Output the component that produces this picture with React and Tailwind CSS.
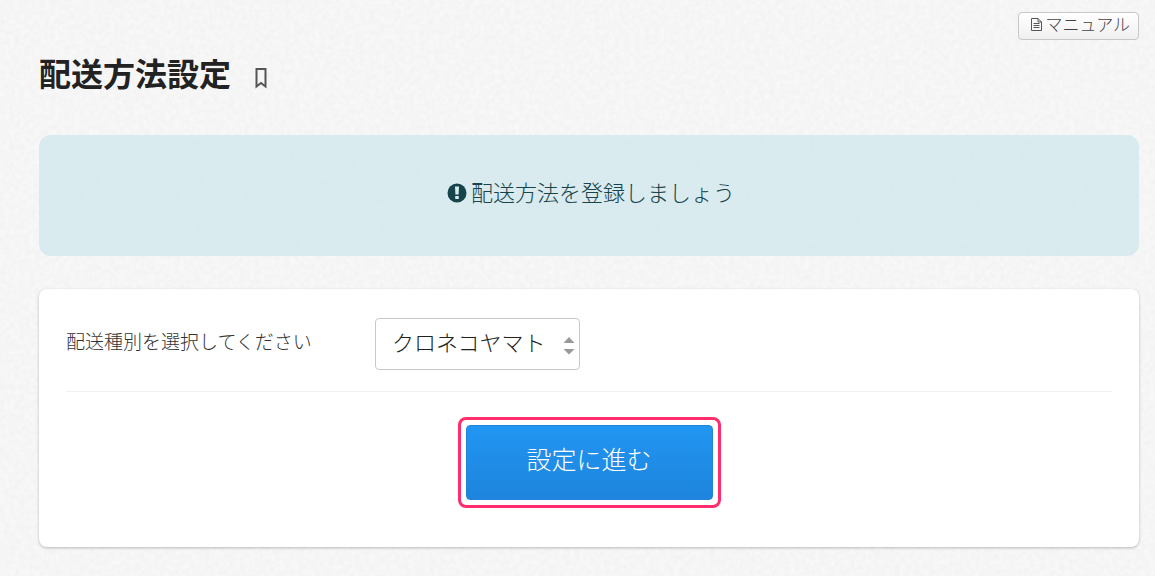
import React from 'react';

const CARRIERS = ['クロネコヤマト', '佐川急便', 'ゆうパック'];

function PaperTexture() {
  return (
    <svg className="absolute inset-0 w-full h-full -z-10" aria-hidden="true">
      <filter id="paper">
        <feTurbulence type="fractalNoise" baseFrequency="0.2" numOctaves="3" seed="4" />
        <feColorMatrix values="0 0 0 0 1  0 0 0 0 1  0 0 0 0 1  1.6 0 0 0 -0.4" />
      </filter>
      <rect width="100%" height="100%" filter="url(#paper)" opacity="0.5" />
    </svg>
  );
}

function DocumentIcon() {
  return (
    <svg className="w-[11px] h-[13px] shrink-0" viewBox="0 0 11 13" fill="none" stroke="#555" aria-hidden="true">
      <path d="M.5.5h6.5l3.500 3.500v8.500H.5z" />
      <path d="M7 .5V4h3.500" />
      <path d="M2.500 5.500h6M2.500 7.500h6M2.500 9.500h6" />
    </svg>
  );
}

function BookmarkIcon() {
  return (
    <svg className="w-3 h-[22px]" viewBox="0 0 12 22" fill="none" stroke="#555" strokeWidth="2" aria-hidden="true">
      <path d="M1.500 2h9v17.500L6 16l-4.500 3.500z" />
    </svg>
  );
}

function AlertIcon() {
  return (
    <svg className="w-5 h-5 mt-1 shrink-0" viewBox="0 0 20 20" aria-hidden="true">
      <circle cx="10" cy="10" r="9.500" fill="#17434b" />
      <path d="M8 3.500h4l-.4 8H8.400z" fill="#d9ebed" />
      <rect x="8.200" y="13" width="3.600" height="3" rx="0.500" fill="#d9ebed" />
    </svg>
  );
}

function CarrierSelect() {
  return (
    <div className="relative w-[205px]">
      <select
        id="carrier"
        className="appearance-none w-full h-[52px] pl-4 pr-7 pb-1.5 rounded border border-[#c8c8c8] bg-white text-[22px] text-[#222]"
      >
        {CARRIERS.map((name) => (
          <option key={name}>{name}</option>
        ))}
      </select>
      <svg
        className="absolute right-[5px] top-[18px] w-3 h-[19px] pointer-events-none"
        viewBox="0 0 12 19"
        fill="#999"
        aria-hidden="true"
      >
        <path d="M6 1l5.500 6H.5zM.5 13h11L6 18.500z" />
      </svg>
    </div>
  );
}

export default function App() {
  return (
    <div className="relative isolate min-h-screen bg-[#f3f3f3] pl-[39px] pr-4 pt-3 pb-7 font-['Noto_Sans_CJK_JP',sans-serif] font-light">
      <PaperTexture />

      <div className="flex justify-end">
        <button
          type="button"
          className="flex items-center gap-1 h-7 pl-3 pr-2 pb-1 rounded border border-[#c8c8c8] bg-linear-to-b from-white to-[#f0f0f0] text-[17px] leading-6 text-[#444]"
        >
          <DocumentIcon />
          マニュアル
        </button>
      </div>

      <header className="flex items-center gap-6 mt-3">
        <h1 className="text-[32px] leading-10 font-bold text-[#222]">配送方法設定</h1>
        <button type="button" aria-label="ブックマーク" className="pt-3">
          <BookmarkIcon />
        </button>
      </header>

      <main>
        <p className="flex items-center justify-center gap-1 mt-[43px] pl-1 pt-10 pb-[49px] rounded-xl bg-[#cfe7eb]/75 text-[22px] leading-8 text-[#17434b]">
          <AlertIcon />
          配送方法を登録しましょう
        </p>

        <form className="mt-[33px] px-[27px] pt-[29px] pb-[39px] rounded-lg bg-white shadow-[0_1px_3px_rgba(0,0,0,0.25)]">
          <div className="grid grid-cols-[309px_1fr] items-center pb-[21px] border-b border-[#f0f0f0]">
            <label htmlFor="carrier" className="pb-1.5 text-[19px] leading-7 text-[#333]">
              配送種別を選択してください
            </label>
            <CarrierSelect />
          </div>

          <div className="w-[263px] mx-auto mt-[25px] p-[5px] rounded-lg border-3 border-[#ff2d6b]">
            <button
              type="button"
              className="w-full h-[75px] pb-2 rounded border border-[#1e86dd] bg-linear-to-b from-[#2196f3] to-[#1e84dc] text-[25px] text-white"
            >
              設定に進む
            </button>
          </div>
        </form>
      </main>
    </div>
  );
}
